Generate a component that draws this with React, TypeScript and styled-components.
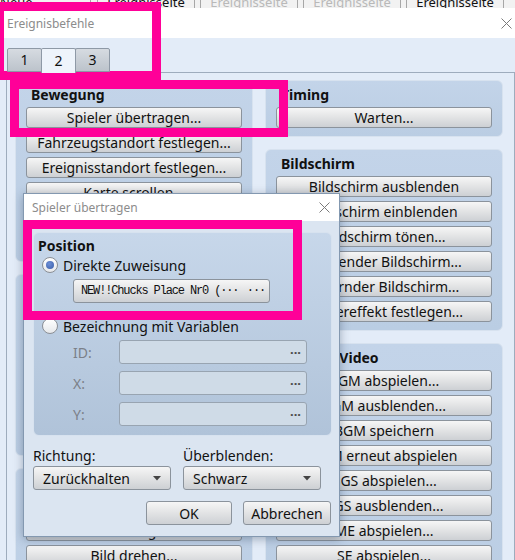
import React, { FC } from 'react';
import styled, { createGlobalStyle } from 'styled-components';

const UI_FONT = `'Noto Sans', 'Open Sans', 'DejaVu Sans', sans-serif`;

const GlobalStyle = createGlobalStyle`
  html, body {
    margin: 0;
    padding: 0;
  }
  body {
    background: #e3ecf8;
    font-family: ${UI_FONT};
    overflow: hidden;
  }
  * {
    box-sizing: border-box;
  }
`;

const Screen = styled.div`
  position: relative;
  width: 515px;
  height: 560px;
  overflow: hidden;
  background: #e3ecf8;
  font-size: 14px;
  color: #111;
`;

/* page tabs of the event editor, peeking out above the command window */
const PageStrip = styled.div`
  display: flex;
  height: 8px;
  overflow: hidden;
  background: #f2f2f2;
  font-size: 13px;
`;

const PageTab = styled.div<{ $dim?: boolean; $width: number }>`
  flex: none;
  display: flex;
  align-items: flex-end;
  justify-content: center;
  width: ${(p) => p.$width}px;
  height: 8px;
  margin-right: 5px;
  border-left: 1px solid #a7a7a7;
  border-right: 1px solid #a7a7a7;
  color: ${(p) => (p.$dim ? '#b9b9b9' : '#111')};

  span {
    line-height: 12px;
    white-space: nowrap;
  }
`;

const NewCell = styled(PageTab)`
  justify-content: flex-start;
  margin-right: 6px;
  border-left: none;
`;

const Window = styled.div`
  display: flex;
  flex-direction: column;
  height: 552px;
`;

const TitleBar = styled.div<{ $height: number; $padLeft: number; $padRight: number }>`
  flex: none;
  display: flex;
  align-items: center;
  justify-content: space-between;
  height: ${(p) => p.$height}px;
  padding: 0 ${(p) => p.$padRight}px 0 ${(p) => p.$padLeft}px;
  background: #fff;
`;

const TitleText = styled.span`
  font-size: 12px;
  color: #8c8c8c;
`;

const WindowBody = styled.div`
  flex: 1;
  display: flex;
  flex-direction: column;
  padding: 10px 0 0 6px;
  background: #e3ecf8;
`;

const TabRow = styled.div`
  display: flex;
  align-items: flex-start;
  height: 24px;
  padding-left: 1px;
  position: relative;
  z-index: 1;
`;

const Tab = styled.div<{ $active?: boolean }>`
  width: 35px;
  height: ${(p) => (p.$active ? 25 : 24)}px;
  margin-right: -1px;
  display: flex;
  align-items: center;
  justify-content: center;
  padding-bottom: 1px;
  font-size: 14px;
  border: 1px solid #8e99a6;
  border-bottom: ${(p) => (p.$active ? 'none' : '1px solid #8e99a6')};
  border-radius: 2px 2px 0 0;
  background: ${(p) =>
    p.$active ? '#eef4fb' : 'linear-gradient(#d6dbe1, #bcc3cb)'};
`;

const TabPage = styled.div`
  flex: 1;
  display: grid;
  grid-template-columns: 238px 238px;
  column-gap: 12px;
  align-items: start;
  padding: 7px 11px 0 8px;
  border: 1px solid #9eacbd;
  border-bottom: none;
  overflow: hidden;
`;

const Column = styled.div`
  display: flex;
  flex-direction: column;
  gap: 12px;
`;

const Group = styled.section`
  display: flex;
  flex-direction: column;
  gap: 4px;
  padding: 4px 10px 8px;
  border: 1px solid #d7e2ef;
  border-radius: 6px;
  background: linear-gradient(#c3d4e9, #bacde3);
`;

const GroupTitle = styled.div<{ $inset?: number }>`
  height: 20px;
  line-height: 20px;
  padding-left: ${(p) => p.$inset ?? 5}px;
  margin-bottom: -2px;
  font-weight: 700;
  white-space: nowrap;
`;

const Button = styled.div`
  flex: none;
  height: 21px;
  display: flex;
  align-items: center;
  justify-content: center;
  border: 1px solid #8b939c;
  border-radius: 3px;
  background: linear-gradient(#f6f6f6, #e4e5e6 45%, #cdd0d4);
  white-space: nowrap;
  overflow: hidden;
`;

/* dialog window: Spieler übertragen */
const Dialog = styled.div`
  position: absolute;
  left: 23px;
  top: 193px;
  width: 317px;
  height: 344px;
  display: flex;
  flex-direction: column;
  border: 1px solid #8398b0;
  box-shadow: 0 2px 9px rgba(30, 45, 70, 0.35);
  background: #dbe5f1;
`;

const DialogBody = styled.div`
  flex: 1;
  display: flex;
  flex-direction: column;
  padding: 11px 7px 0 9px;
`;

const PositionGroup = styled(Group)`
  gap: 0;
  padding: 3px 8px 9px 4px;
  background: linear-gradient(#c7d7ea, #b0c3d9);
`;

const RadioRow = styled.div<{ $top: number }>`
  flex: none;
  display: flex;
  align-items: center;
  gap: 5px;
  height: 20px;
  margin: ${(p) => p.$top}px 0 0 4px;
  white-space: nowrap;
`;

const RadioDot = styled.span<{ $checked?: boolean }>`
  flex: none;
  width: 16px;
  height: 16px;
  border-radius: 50%;
  border: 1px solid #8b8f95;
  background: linear-gradient(#ffffff, #e6e8eb);
  display: flex;
  align-items: center;
  justify-content: center;

  &::after {
    content: '';
    display: ${(p) => (p.$checked ? 'block' : 'none')};
    width: 8px;
    height: 8px;
    border-radius: 50%;
    background: radial-gradient(circle at 40% 35%, #6d8fd6, #3b5ea8);
  }
`;

const MapButton = styled(Button)`
  width: 197px;
  height: 24px;
  margin: 4px 0 0 35px;
  justify-content: space-between;
  padding: 0 4px 0 7px;
  font-family: 'Liberation Mono', 'DejaVu Sans Mono', monospace;
  font-size: 12px;
  letter-spacing: -1.15px;
`;

const FieldRow = styled.div<{ $top: number }>`
  flex: none;
  display: flex;
  align-items: center;
  height: 24px;
  margin: ${(p) => p.$top}px 0 0 35px;
`;

const FieldLabel = styled.span`
  width: 46px;
  color: #7b8088;
`;

const Field = styled.div`
  width: 188px;
  height: 24px;
  display: flex;
  align-items: center;
  justify-content: flex-end;
  padding-right: 5px;
  border: 1px solid #98a4b1;
  border-radius: 3px;
  background: #cfdbe7;
  color: #4a4a4a;
  font-size: 13px;
  font-weight: 700;
`;

const OptionGrid = styled.div`
  display: grid;
  grid-template-columns: 138px 138px;
  column-gap: 12px;
  margin-top: 10px;
`;

const OptionLabel = styled.div`
  height: 20px;
  line-height: 20px;
`;

const Select = styled(Button)`
  height: 24px;
  justify-content: space-between;
  padding: 0 9px 0 9px;
`;

const ButtonBar = styled.div`
  display: flex;
  justify-content: flex-end;
  gap: 11px;
  margin: 11px 1px 0 0;
`;

const DialogButton = styled(Button)<{ $width: number }>`
  width: ${(p) => p.$width}px;
  height: 24px;
`;

/* magenta highlight frames drawn on top */
const Highlight = styled.div<{ $x: number; $y: number; $w: number; $h: number }>`
  position: absolute;
  left: ${(p) => p.$x}px;
  top: ${(p) => p.$y}px;
  width: ${(p) => p.$w}px;
  height: ${(p) => p.$h}px;
  border: 9px solid #ff0098;
  pointer-events: none;
`;

const CloseIcon: FC = () => (
  <svg width="11" height="11" viewBox="0 0 11 11">
    <path d="M0.5 0.5L10.5 10.5M10.5 0.5L0.5 10.5" stroke="#7a7a7a" strokeWidth="1" />
  </svg>
);

const ArrowDown: FC = () => (
  <svg width="8" height="5" viewBox="0 0 8 5">
    <path d="M0 0H8L4 4.5Z" fill="#444" />
  </svg>
);

interface CommandGroup {
  title: string;
  commands: string[];
}

const leftGroups: CommandGroup[] = [
  {
    title: 'Bewegung',
    commands: [
      'Spieler übertragen...',
      'Fahrzeugstandort festlegen...',
      'Ereignisstandort festlegen...',
      'Karte scrollen...',
      'Bewegungsroute festlegen...',
      'Fahrzeug ein-/aussteigen',
    ],
  },
  {
    title: 'Charakter',
    commands: [
      'Transparenz ändern...',
      'Spielergefolge ändern...',
      'Gefolge sammeln',
      'Animation anzeigen...',
      'Sprechblase anzeigen...',
      'Ereignis löschen',
    ],
  },
  {
    title: 'Bild',
    commands: ['Bild anzeigen...', 'Bild bewegen...', 'Bild drehen...', 'Bild tönen...', 'Bild löschen...'],
  },
];

const rightGroups: CommandGroup[] = [
  { title: 'Timing', commands: ['Warten...'] },
  {
    title: 'Bildschirm',
    commands: [
      'Bildschirm ausblenden',
      'Bildschirm einblenden',
      'Bildschirm tönen...',
      'Blinkender Bildschirm...',
      'Zitternder Bildschirm...',
      'Wettereffekt festlegen...',
    ],
  },
  {
    title: 'Audio & Video',
    commands: [
      'BGM abspielen...',
      'BGM ausblenden...',
      'BGM speichern',
      'BGM erneut abspielen',
      'BGS abspielen...',
      'BGS ausblenden...',
      'ME abspielen...',
      'SE abspielen...',
      'SE stoppen',
      'Film abspielen...',
    ],
  },
];

const pageTabs = [
  { label: 'Ereignisseite', dim: false },
  { label: 'Ereignisseite', dim: true },
  { label: 'Ereignisseite', dim: true },
  { label: 'Ereignisseite', dim: false },
];

const GroupList: FC<{ groups: CommandGroup[] }> = ({ groups }) => (
  <Column>
    {groups.map((g) => (
      <Group key={g.title}>
        <GroupTitle>{g.title}</GroupTitle>
        {g.commands.map((c) => (
          <Button key={c}>{c}</Button>
        ))}
      </Group>
    ))}
  </Column>
);

const TransferDialog: FC = () => (
  <Dialog>
    <TitleBar $height={27} $padLeft={8} $padRight={9}>
      <TitleText>Spieler übertragen</TitleText>
      <CloseIcon />
    </TitleBar>
    <DialogBody>
      <PositionGroup>
        <GroupTitle $inset={0}>Position</GroupTitle>
        <RadioRow $top={1}>
          <RadioDot $checked />
          Direkte Zuweisung
        </RadioRow>
        <MapButton>
          <span>NEW!!Chucks Place Nr0 (···</span>
          <span>···</span>
        </MapButton>
        <RadioRow $top={13}>
          <RadioDot />
          Bezeichnung mit Variablen
        </RadioRow>
        {['ID:', 'X:', 'Y:'].map((l, i) => (
          <FieldRow key={l} $top={i === 0 ? 4 : 7}>
            <FieldLabel>{l}</FieldLabel>
            <Field>···</Field>
          </FieldRow>
        ))}
      </PositionGroup>
      <OptionGrid>
        <OptionLabel>Richtung:</OptionLabel>
        <OptionLabel>Überblenden:</OptionLabel>
        <Select>
          Zurückhalten
          <ArrowDown />
        </Select>
        <Select>
          Schwarz
          <ArrowDown />
        </Select>
      </OptionGrid>
      <ButtonBar>
        <DialogButton $width={86}>OK</DialogButton>
        <DialogButton $width={88}>Abbrechen</DialogButton>
      </ButtonBar>
    </DialogBody>
  </Dialog>
);

const App: FC = () => (
  <Screen>
    <GlobalStyle />
    <PageStrip>
      <NewCell $width={91}>
        <span>Neue</span>
      </NewCell>
      {pageTabs.map((t, i) => (
        <PageTab key={i} $width={98} $dim={t.dim}>
          <span>{t.label}</span>
        </PageTab>
      ))}
    </PageStrip>
    <Window>
      <TitleBar $height={30} $padLeft={7} $padRight={3}>
        <TitleText>Ereignisbefehle</TitleText>
        <CloseIcon />
      </TitleBar>
      <WindowBody>
        <TabRow>
          <Tab>1</Tab>
          <Tab $active>2</Tab>
          <Tab>3</Tab>
        </TabRow>
        <TabPage>
          <GroupList groups={leftGroups} />
          <GroupList groups={rightGroups} />
        </TabPage>
      </WindowBody>
    </Window>

    <TransferDialog />

    <Highlight $x={-5} $y={2} $w={166} $h={78} />
    <Highlight $x={10} $y={80} $w={278} $h={57} />
    <Highlight $x={23} $y={220} $w={279} $h={100} />
  </Screen>
);

export default App;
